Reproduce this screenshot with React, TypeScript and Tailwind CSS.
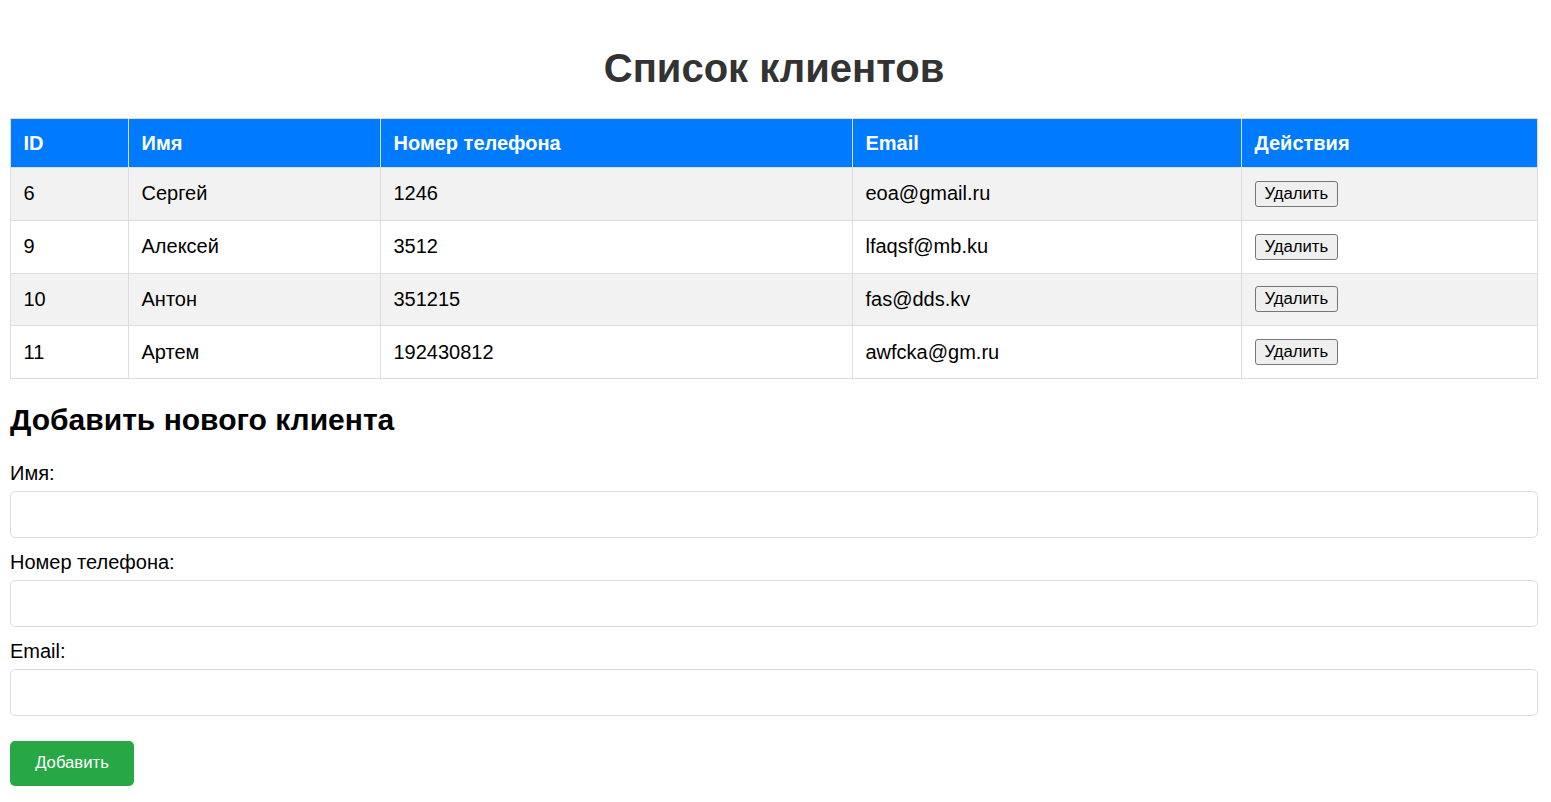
import { useState } from 'react';

interface Client {
  id: number;
  name: string;
  phone: string;
  email: string;
}

const initialClients: Client[] = [
  { id: 6, name: 'Сергей', phone: '1246', email: 'eoa@gmail.ru' },
  { id: 9, name: 'Алексей', phone: '3512', email: 'lfaqsf@mb.ku' },
  { id: 10, name: 'Антон', phone: '351215', email: 'fas@dds.kv' },
  { id: 11, name: 'Артем', phone: '192430812', email: 'awfcka@gm.ru' },
];

export default function App() {
  const [clients, setClients] = useState<Client[]>(initialClients);
  const [name, setName] = useState('');
  const [phone, setPhone] = useState('');
  const [email, setEmail] = useState('');

  const handleAdd = () => {
    if (!name) return;
    const nextId = clients.length ? Math.max(...clients.map((c) => c.id)) + 1 : 1;
    setClients([...clients, { id: nextId, name, phone, email }]);
    setName('');
    setPhone('');
    setEmail('');
  };

  return (
    <div className="min-h-screen bg-white pl-[10px] pr-[13px] pb-4 text-[20px] text-black" style={{ fontFamily: '"Liberation Sans", Arial, sans-serif' }}>
      <h1 className="pt-[45px] text-center text-[40px] font-bold leading-[46px] text-[#333]">Список клиентов</h1>

      <table className="mt-[27px] w-full border-collapse table-fixed">
        <colgroup>
          <col className="w-[118px]" />
          <col className="w-[252px]" />
          <col className="w-[472px]" />
          <col className="w-[389px]" />
          <col />
        </colgroup>
        <thead>
          <tr className="bg-[#007bff] text-white">
            {['ID', 'Имя', 'Номер телефона', 'Email', 'Действия'].map((h) => (
              <th key={h} className="border border-[#ddd] px-[12.5px] py-[12px] text-left font-bold leading-[24px]">{h}</th>
            ))}
          </tr>
        </thead>
        <tbody>
          {clients.map((c, i) => (
            <tr key={c.id} className={i % 2 === 0 ? 'bg-[#f2f2f2]' : 'bg-white'}>
              <td className="h-[52.75px] border border-[#ddd] px-[12.5px] py-0 leading-[23px]">{c.id}</td>
              <td className="h-[52.75px] border border-[#ddd] px-[12.5px] py-0 leading-[23px]">{c.name}</td>
              <td className="h-[52.75px] border border-[#ddd] px-[12.5px] py-0 leading-[23px]">{c.phone}</td>
              <td className="h-[52.75px] border border-[#ddd] px-[12.5px] py-0 leading-[23px]">{c.email}</td>
              <td className="h-[52.75px] border border-[#ddd] px-[12.5px] py-0 leading-[23px]">
                <button
                  onClick={() => setClients(clients.filter((x) => x.id !== c.id))}
                  className="h-[26px] rounded-[3px] border border-[#767676] bg-[#efefef] px-[9px] align-middle text-[16.7px] leading-[20px] text-black"
                >
                  Удалить
                </button>
              </td>
            </tr>
          ))}
        </tbody>
      </table>

      <h2 className="mt-[24px] mb-[24px] text-[30px] font-bold leading-[34.5px]">Добавить нового клиента</h2>

      <div>
        <label className="mb-[6px] block leading-[23px]">Имя:</label>
        <input value={name} onChange={(e) => setName(e.target.value)} className="mb-[13px] block h-[47px] w-full rounded-[5px] border border-[#ddd] px-[12px] text-[20px] outline-none" />
        <label className="mb-[6px] block leading-[23px]">Номер телефона:</label>
        <input value={phone} onChange={(e) => setPhone(e.target.value)} className="mb-[13px] block h-[47px] w-full rounded-[5px] border border-[#ddd] px-[12px] text-[20px] outline-none" />
        <label className="mb-[6px] block leading-[23px]">Email:</label>
        <input value={email} onChange={(e) => setEmail(e.target.value)} className="block h-[47px] w-full rounded-[5px] border border-[#ddd] px-[12px] text-[20px] outline-none" />
        <button onClick={handleAdd} className="mt-[25px] h-[45px] w-[124px] rounded-[5px] bg-[#28a745] text-[16.7px] text-white">
          Добавить
        </button>
      </div>
    </div>
  );
}
